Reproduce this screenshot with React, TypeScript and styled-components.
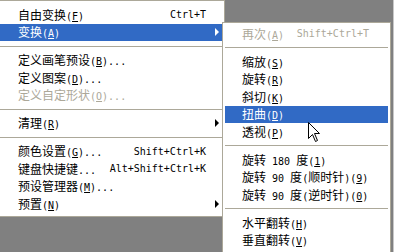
import styled, { createGlobalStyle } from 'styled-components'

const GlobalStyle = createGlobalStyle`
  body {
    margin: 0;
    background: #808080;
  }
`

const Screen = styled.div`
  position: relative;
  width: 394px;
  height: 252px;
  overflow: hidden;
  display: flex;
  align-items: flex-start;
  background: #808080;
  box-shadow: inset -1px 0 #c8c8c8;
`

interface MenuProps {
  $sub?: boolean;
}

const Menu = styled.div<MenuProps>`
  box-sizing: border-box;
  flex: none;
  background: #ffffff;
  border: 1px solid #aca899;
  border-left: ${(p) => (p.$sub ? '1px solid #aca899' : 'none')};
  width: ${(p) => (p.$sub ? '169px' : '225px')};
  margin-left: ${(p) => (p.$sub ? '-3px' : '0')};
  margin-top: ${(p) => (p.$sub ? '22px' : '0')};
  padding: ${(p) => (p.$sub ? '2px 2px 40px 2px' : '5px 2px 3px 0')};
`

interface ItemProps {
  $active?: boolean;
  $disabled?: boolean;
  $indent: number;
}

const Item = styled.div<ItemProps>`
  display: flex;
  align-items: center;
  height: 17.5px;
  padding-left: ${(p) => p.$indent}px;
  white-space: nowrap;
  background: ${(p) => (p.$active ? '#316ac5' : 'transparent')};
  color: ${(p) => (p.$active ? '#ffffff' : p.$disabled ? '#aca899' : '#000000')};
`

const Label = styled.span`
  flex: 1;
`

const Shortcut = styled.span`
  font: 10px "DejaVu Sans Mono", "Liberation Mono", monospace;
`

interface SlotProps {
  $width: number;
}

const Slot = styled.span<SlotProps>`
  flex: none;
  width: ${(p) => p.$width}px;
  height: 100%;
  display: flex;
  align-items: center;
  padding-left: 9px;
  box-sizing: border-box;
`

const Arrow = styled.span`
  width: 0;
  height: 0;
  border-top: 4px solid transparent;
  border-bottom: 4px solid transparent;
  border-left: 4px solid currentColor;
`

const Separator = styled.div`
  height: 1px;
  margin: 4.75px 0;
  background: #aca899;
`

const Cjk = styled.span`
  font: 12px "Noto Sans CJK SC", sans-serif;
`

const Ascii = styled.span`
  font: 10px "DejaVu Sans Mono", "Liberation Mono", monospace;
`

const Cursor = styled.svg`
  position: absolute;
  left: 308px;
  top: 122px;
`

type Entry =
  | { sep: true }
  | { text: string; shortcut?: string; arrow?: boolean; active?: boolean; disabled?: boolean; sep?: false }

const mainItems: Entry[] = [
  { text: '自由变换(&F)', shortcut: 'Ctrl+T' },
  { text: '变换(&A)', arrow: true, active: true },
  { sep: true },
  { text: '定义画笔预设(&B)...' },
  { text: '定义图案(&D)...' },
  { text: '定义自定形状(&O)...', disabled: true },
  { sep: true },
  { text: '清理(&R)', arrow: true },
  { sep: true },
  { text: '颜色设置(&G)...', shortcut: 'Shift+Ctrl+K' },
  { text: '键盘快捷键...', shortcut: 'Alt+Shift+Ctrl+K' },
  { text: '预设管理器(&M)...' },
  { text: '预置(&N)', arrow: true },
]

const subItems: Entry[] = [
  { text: '再次(&A)', shortcut: 'Shift+Ctrl+T', disabled: true },
  { sep: true },
  { text: '缩放(&S)' },
  { text: '旋转(&R)' },
  { text: '斜切(&K)' },
  { text: '扭曲(&D)', active: true },
  { text: '透视(&P)' },
  { sep: true },
  { text: '旋转 180 度(&1)' },
  { text: '旋转 90 度(顺时针)(&9)' },
  { text: '旋转 90 度(逆时针)(&0)' },
  { sep: true },
  { text: '水平翻转(&H)' },
  { text: '垂直翻转(&V)' },
]

// split into CJK / ASCII runs, '&' underlines the next char
const renderText = (text: string) => {
  const runs = text.match(/[\u3000-\u9fff]+|[^\u3000-\u9fff]+/g) || []
  return runs.map((run, i) => {
    if (/[\u3000-\u9fff]/.test(run)) return <Cjk key={i}>{run}</Cjk>
    const parts = run.split('&')
    return (
      <Ascii key={i}>
        {parts.map((part, j) =>
          j === 0 ? part : (<span key={j}><u>{part[0]}</u>{part.slice(1)}</span>)
        )}
      </Ascii>
    )
  })
}

const MenuList = ({ items, indent, slot }: { items: Entry[], indent: number, slot: number }) => (
  <>
    {items.map((item, index) => item.sep ? (<Separator key={index} />) : (
      <Item key={index} $indent={indent} $active={item.active} $disabled={item.disabled}>
        <Label>{renderText(item.text)}</Label>
        {item.shortcut && <Shortcut>{item.shortcut}</Shortcut>}
        <Slot $width={slot}>{item.arrow && <Arrow />}</Slot>
      </Item>
    ))}
  </>
)

export default function App() {
  return (
    <>
      <GlobalStyle />
      <Screen>
        <Menu>
          <MenuList items={mainItems} indent={18} slot={16} />
        </Menu>
        <Menu $sub>
          <MenuList items={subItems} indent={17} slot={19} />
        </Menu>
        <Cursor width="13" height="20" viewBox="0 0 13 20">
          <path d="M0.5 0.5 L0.5 16.5 L4.5 12.5 L7.5 19.5 L9.5 18.5 L6.5 11.5 L11.5 11.5 Z" fill="#ffffff" stroke="#000000" strokeWidth="1" />
        </Cursor>
      </Screen>
    </>
  )
}
